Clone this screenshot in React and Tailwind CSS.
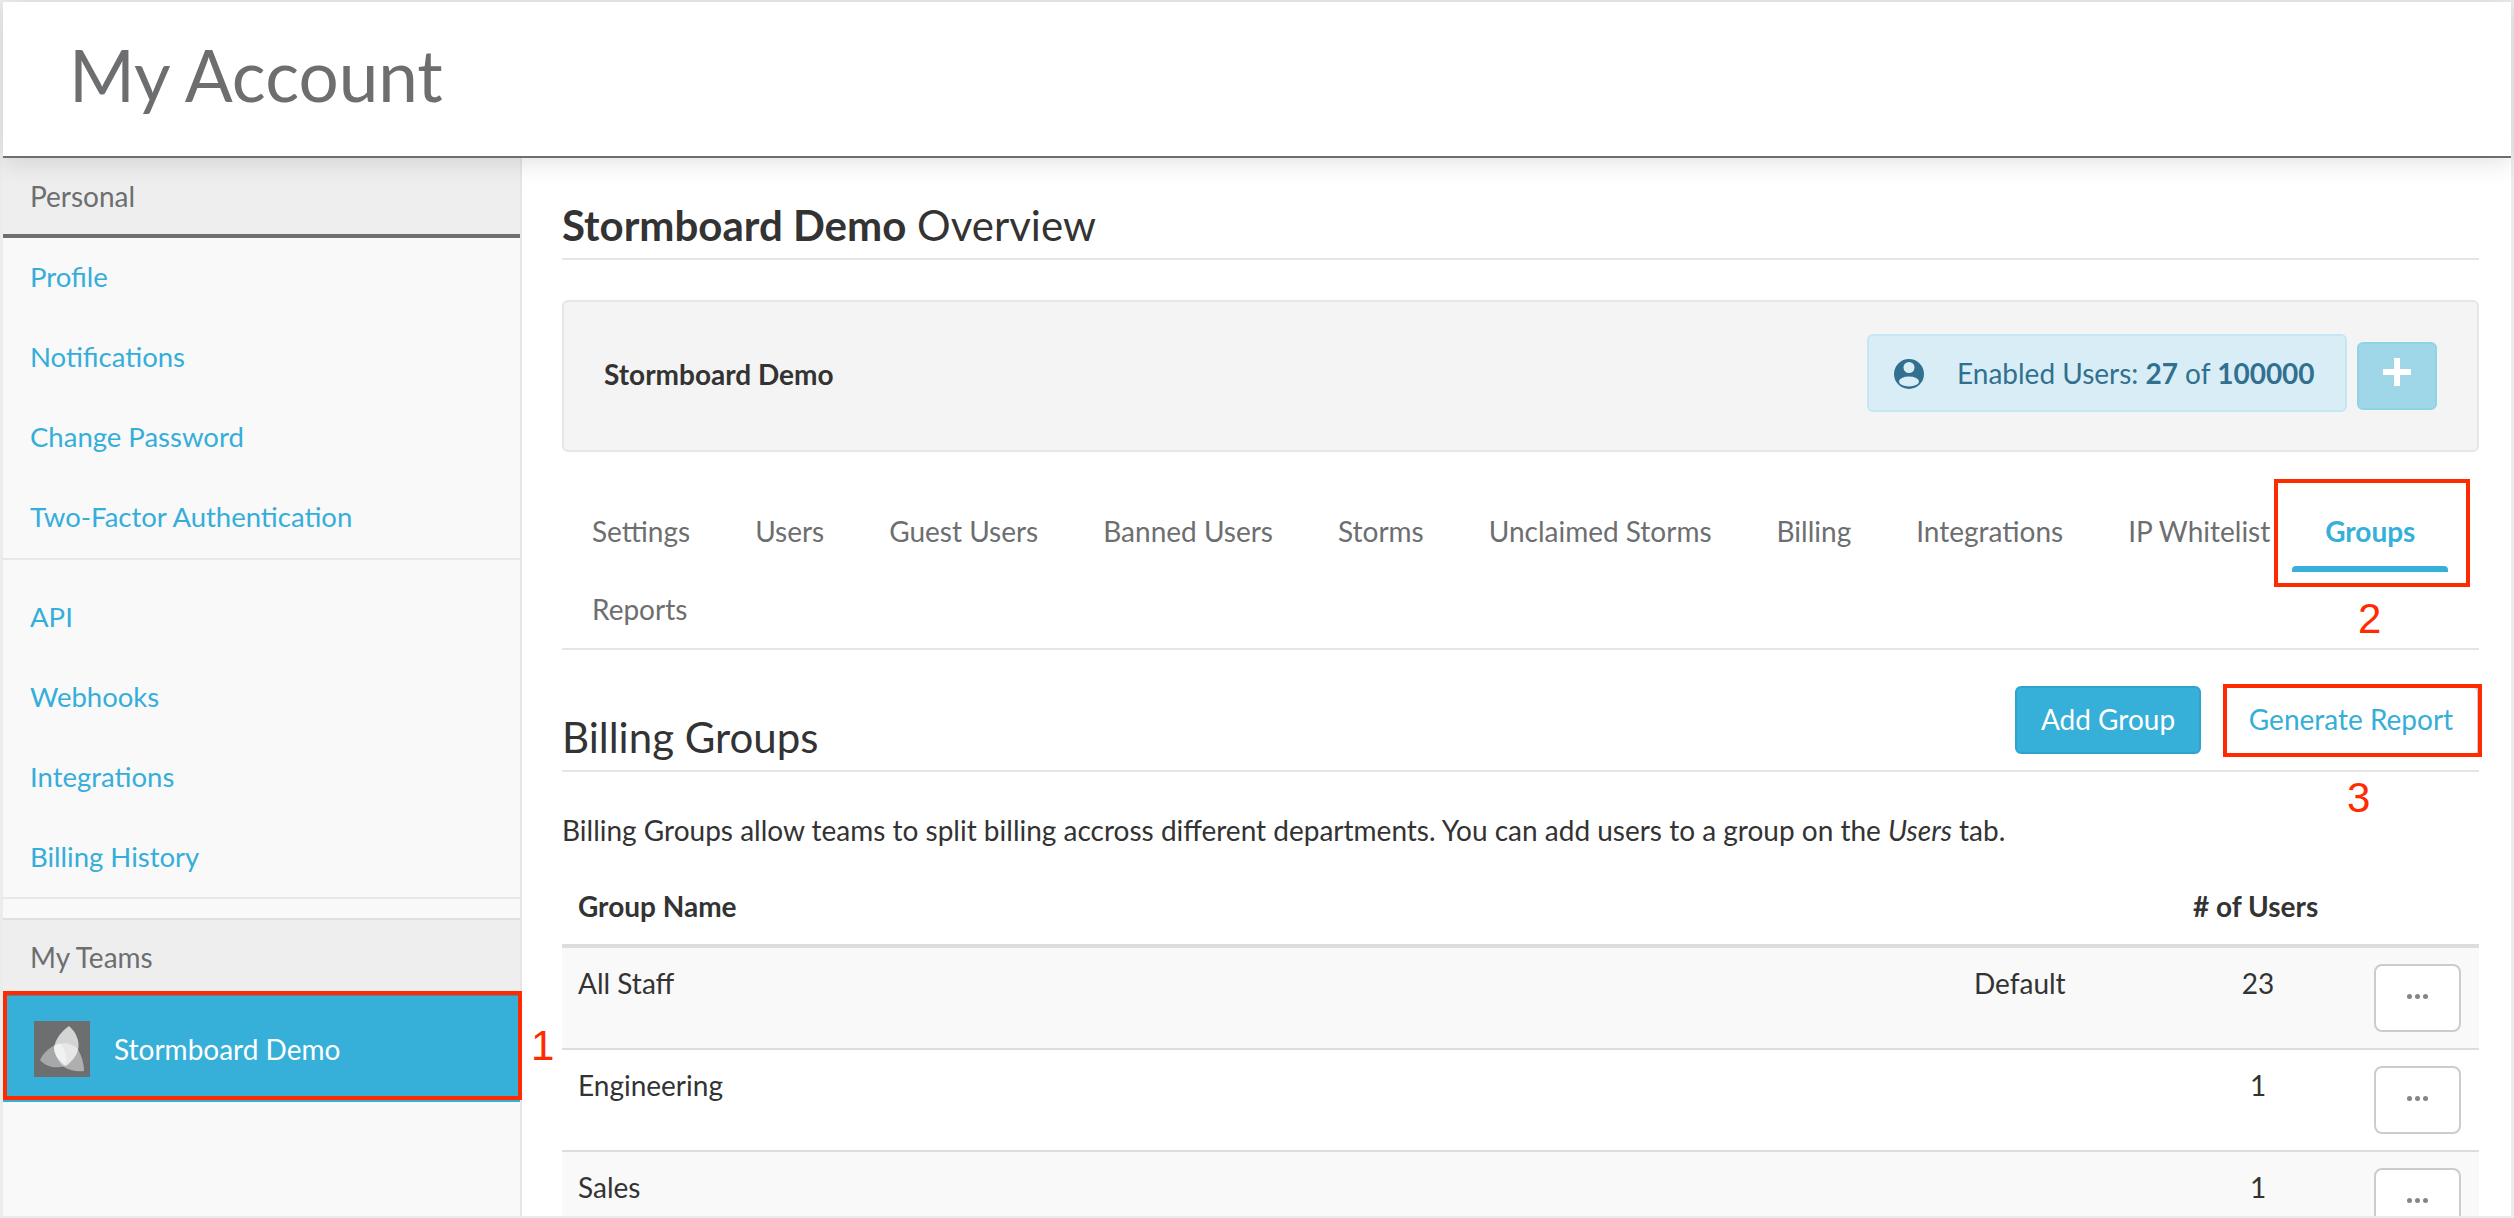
const personalLinks = ["Profile", "Notifications", "Change Password", "Two-Factor Authentication"]
const otherLinks = ["API", "Webhooks", "Integrations", "Billing History"]
const tabs = ["Settings", "Users", "Guest Users", "Banned Users", "Storms", "Unclaimed Storms", "Billing", "Integrations", "IP Whitelist"]
const groups = [
  { name: "All Staff", tag: "Default", users: 23, bg: "bg-[#f9f9f9]" },
  { name: "Engineering", tag: "", users: 1, bg: "bg-white" },
  { name: "Sales", tag: "", users: 1, bg: "bg-[#f9f9f9]" },
]

function SideLink({ label, className = "" }) {
  return (
    <a className={"flex h-20 items-center pl-[27px] text-[27.5px] text-[#35aed9] " + className}>{label}</a>
  )
}

function Logo() {
  return (
    <svg viewBox="0 0 56 56" className="h-[56px] w-[56px] shrink-0">
      <rect width="56" height="56" fill="#6d6e70" />
      <path d="M35 5 C42 11 46 20 44 29 C42 36 37 41 32 45 C26 41 20 34 20 27 C21 18 28 10 35 5 Z" fill="#fff" opacity="0.7" />
      <path d="M6 39 C10 30 19 24 26 22 C32 29 34 38 31 45 C22 48 12 46 6 39 Z" fill="#fff" opacity="0.4" />
      <path d="M50 50 C50 42 47 33 43 27 C36 21 27 21 20 25 C20 34 25 41 30 46 C37 50 44 51 50 50 Z" fill="#fff" opacity="0.45" />
    </svg>
  )
}

function UserBadgeIcon() {
  return (
    <svg viewBox="0 0 30 30" className="mt-[2px] h-[30px] w-[30px] shrink-0">
      <circle cx="15" cy="15" r="15" fill="#31708f" />
      <circle cx="15" cy="8.5" r="5.5" fill="#d9edf6" />
      <ellipse cx="15" cy="22.5" rx="10" ry="5" fill="#d9edf6" />
    </svg>
  )
}

function Box({ className }) {
  return <div className={"pointer-events-none absolute border-[4px] border-[#ff2a00] " + className} />
}

function Num({ className, children }) {
  return (
    <span className={"absolute font-['Liberation_Sans',sans-serif] text-[42px] leading-none text-[#ff2a00] " + className}>
      {children}
    </span>
  )
}

export default function App() {
  return (
    <div className="relative h-[1218px] w-[2514px] overflow-hidden bg-[#ececec] pt-[2px] pr-[3px] pb-[2px] pl-[3px] font-['Lato',sans-serif]">
      <div className="flex h-full flex-col bg-white">
        {/* page header */}
        <header className="z-10 flex h-[156px] shrink-0 items-center border-b-2 border-[#6d6e70] bg-white pb-[10px] pl-[66px] shadow-[0_4px_24px_rgba(0,0,0,0.12)]">
          <h1 className="text-[71px] leading-none text-[#6d6e70]">My Account</h1>
        </header>

        <div className="flex min-h-0 flex-1">
          {/* sidebar */}
          <aside className="flex w-[519px] shrink-0 flex-col border-r-2 border-[#e5e5e5] bg-[#f9f9f9]">
            <div className="flex h-[80px] shrink-0 items-center border-b-4 border-[#6d6e70] bg-[#eeeeee] pl-[27px] text-[28px] text-[#6d6e70]">
              Personal
            </div>
            <nav className="h-[320px] shrink-0">
              {personalLinks.map((l) => <SideLink key={l} label={l} className="pb-[3px]" />)}
            </nav>
            <div className="h-[19px] shrink-0 border-t-2 border-[#e8e8e8]" />
            <nav className="h-[320px] shrink-0">
              {otherLinks.map((l) => <SideLink key={l} label={l} />)}
            </nav>
            <div className="h-[21px] shrink-0 border-t-2 border-[#e8e8e8]" />
            <div className="flex h-[74px] shrink-0 items-center border-t-2 border-[#e0e0e0] bg-[#eeeeee] pt-[2px] pl-[27px] text-[28px] text-[#6d6e70]">
              My Teams
            </div>
            <div className="flex h-[110px] shrink-0 items-center gap-[24px] border-t-4 border-[#4a87a0] bg-[#36afd9] pl-[31px] text-[28px] text-white">
              <Logo />
              <span>Stormboard Demo</span>
            </div>
          </aside>

          {/* main content */}
          <main className="min-w-0 flex-1 overflow-hidden pt-[43px] pr-[32px] pl-[40px] text-[#333333]">
            <h2 className="border-b-2 border-[#e5e5e5] pb-[9px] text-[42px] leading-[48px]">
              <strong className="font-bold">Stormboard Demo</strong> Overview
            </h2>

            <div className="mt-[40px] flex h-[152px] items-center justify-between rounded-[6px] border-2 border-[#e6e6e6] bg-[#f4f4f4] px-[40px]">
              <span className="pb-[4px] text-[28px] font-bold">Stormboard Demo</span>
              <div className="flex items-center gap-[10px]">
                <div className="mb-[6px] flex h-[78px] w-[480px] items-center rounded-[6px] border-2 border-[#c4e8f2] bg-[#d9edf6] pl-[25px] text-[28px] text-[#31708f]">
                  <UserBadgeIcon />
                  <span className="ml-[33px] whitespace-nowrap">
                    Enabled Users: <strong className="font-bold">27</strong> of <strong className="font-bold">100000</strong>
                  </span>
                </div>
                <button className="flex h-[68px] w-[80px] items-center justify-center rounded-[6px] border-2 border-[#92d2e6] bg-[#9fd7e9] pb-[8px]">
                  <svg viewBox="0 0 28 28" className="h-[28px] w-[28px]" fill="#ffffff">
                    <rect x="11" y="0" width="6" height="28" />
                    <rect x="0" y="11" width="28" height="6" />
                  </svg>
                </button>
              </div>
            </div>

            {/* tabs */}
            <div className="mt-[30px] border-b-2 border-[#e5e5e5] pb-[10px]">
              <div className="flex h-[97px] pl-[30px] text-[28px] text-[#6d6e70]">
                {tabs.map((t) => (
                  <a
                    key={t}
                    className={"flex h-[90px] items-center whitespace-nowrap pt-[14px] pb-[6px] " + (t === "IP Whitelist" ? "mr-[22px]" : "mr-[65px]")}
                  >
                    {t}
                  </a>
                ))}
                <a className="relative flex h-[90px] w-[156px] items-center justify-center pt-[14px] pb-[6px] font-bold text-[#36afd9]">
                  Groups
                  <span className="absolute right-0 bottom-0 left-0 h-[6px] rounded-t-[4px] bg-[#36afd9]" />
                </a>
              </div>
              <div className="flex h-[59px] items-center pl-[30px] text-[28px] text-[#6d6e70]">Reports</div>
            </div>

            {/* billing groups head */}
            <div className="mt-[36px] flex h-[86px] items-end justify-between border-b-2 border-[#e5e5e5]">
              <h3 className="pb-[9px] text-[42px] leading-[48px]">Billing Groups</h3>
              <div className="flex gap-[22px] self-start">
                <button className="flex h-[68px] w-[186px] items-center justify-center rounded-[6px] border-2 border-[#2ea3cc] bg-[#36afd9] pb-[2px] text-[28px] text-white">
                  Add Group
                </button>
                <button className="flex h-[70px] w-[256px] items-center justify-center rounded-[6px] border-2 border-[#cccccc] bg-white pb-[4px] text-[28px] text-[#35aed9]">
                  Generate Report
                </button>
              </div>
            </div>

            <p className="mt-[40px] text-[28px] leading-[36px] whitespace-nowrap">
              Billing Groups allow teams to split billing accross different departments. You can add users to a group on the <em>Users</em> tab.
            </p>

            {/* table */}
            <div className="mt-[36px] flex h-[64px] border-b-4 border-[#dddddd] pt-[1px] pl-[16px] text-[28px] font-bold">
              <span className="w-[1615px]">Group Name</span>
              <span className="whitespace-nowrap"># of Users</span>
            </div>
            {groups.map((g) => (
              <div key={g.name} className={"flex h-[102px] border-b-2 border-[#dddddd] pl-[16px] text-[28px] " + g.bg}>
                <span className="w-[1396px] pt-[17px] leading-[36px]">{g.name}</span>
                <span className="w-[219px] pt-[17px] leading-[36px]">{g.tag}</span>
                <span className="w-[130px] pt-[17px] text-center leading-[36px]">{g.users}</span>
                <button className="mt-[16px] ml-[51px] flex h-[68px] w-[87px] items-center justify-center gap-[3px] rounded-[8px] border-2 border-[#cccccc] bg-white pb-[4px]">
                  <span className="h-[5px] w-[5px] rounded-full bg-[#858585]" />
                  <span className="h-[5px] w-[5px] rounded-full bg-[#858585]" />
                  <span className="h-[5px] w-[5px] rounded-full bg-[#858585]" />
                </button>
              </div>
            ))}
          </main>
        </div>
      </div>

      {/* annotations */}
      <Box className="left-[3px] top-[991px] h-[109px] w-[519px]" />
      <Box className="left-[2274px] top-[479px] h-[108px] w-[196px]" />
      <Box className="left-[2223px] top-[684px] h-[73px] w-[259px]" />
      <Num className="left-[531px] top-[1025px]">1</Num>
      <Num className="left-[2358px] top-[598px]">2</Num>
      <Num className="left-[2347px] top-[777px]">3</Num>
    </div>
  )
}
